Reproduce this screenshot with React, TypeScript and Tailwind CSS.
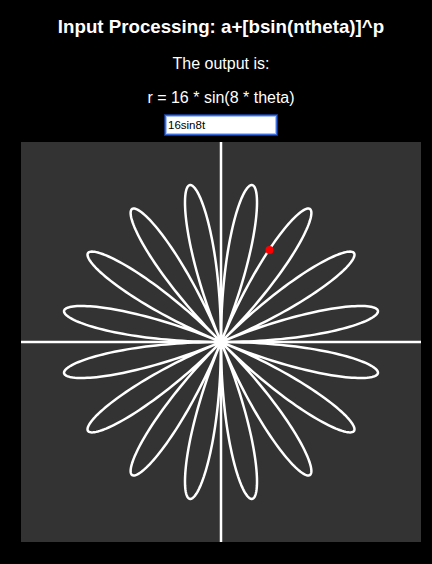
const SIZE = 400;
const CENTER = SIZE / 2;

// r = 16 * sin(8 * theta), scaled by 10 px per unit
function rosePath() {
  const pts: string[] = [];
  for (let i = 0; i <= 1440; i++) {
    const theta = (i / 1440) * Math.PI * 2;
    const r = 160 * Math.sin(8 * theta);
    const x = CENTER + r * Math.cos(theta);
    const y = CENTER - r * Math.sin(theta);
    pts.push(`${i === 0 ? "M" : "L"}${x.toFixed(2)} ${y.toFixed(2)}`);
  }
  return pts.join(" ") + " Z";
}

export default function App() {
  return (
    <div className="w-[432px] h-[564px] overflow-hidden bg-black text-white pl-[10px] font-['Helvetica','Liberation_Sans',sans-serif]">
      <div className="flex flex-col items-center">
        <h1 className="text-[18.72px] leading-[21px] font-bold mt-[16px]">
          Input Processing: a+[bsin(ntheta)]^p
        </h1>
        <p className="text-[16px] leading-[18px] mt-[18px]">The output is:</p>
        <p className="text-[16px] leading-[18px] mt-[16px]">r = 16 * sin(8 * theta)</p>
        <input
          readOnly
          value="16sin8t"
          className="block w-[110px] h-[18px] mt-[9px] pl-[1px] bg-white text-black text-[11.5px] font-['Liberation_Sans',sans-serif] border border-[#a9c0f5] outline-none shadow-[0_0_0_1px_#3a6ee0,0_0_0_2px_#12337f]"
        />
        <svg width={SIZE} height={SIZE} viewBox="0 0 400 400" className="block mt-[8px] bg-[#333333]">
          <line x1="0" y1="200" x2="400" y2="200" stroke="white" strokeWidth="2.5" />
          <line x1="200" y1="0" x2="200" y2="400" stroke="white" strokeWidth="2.5" />
          <path d={rosePath()} fill="none" stroke="white" strokeWidth="2.5" strokeLinejoin="round" />
          <circle cx="248.5" cy="108" r="4" fill="#ff0000" />
        </svg>
      </div>
    </div>
  );
}
